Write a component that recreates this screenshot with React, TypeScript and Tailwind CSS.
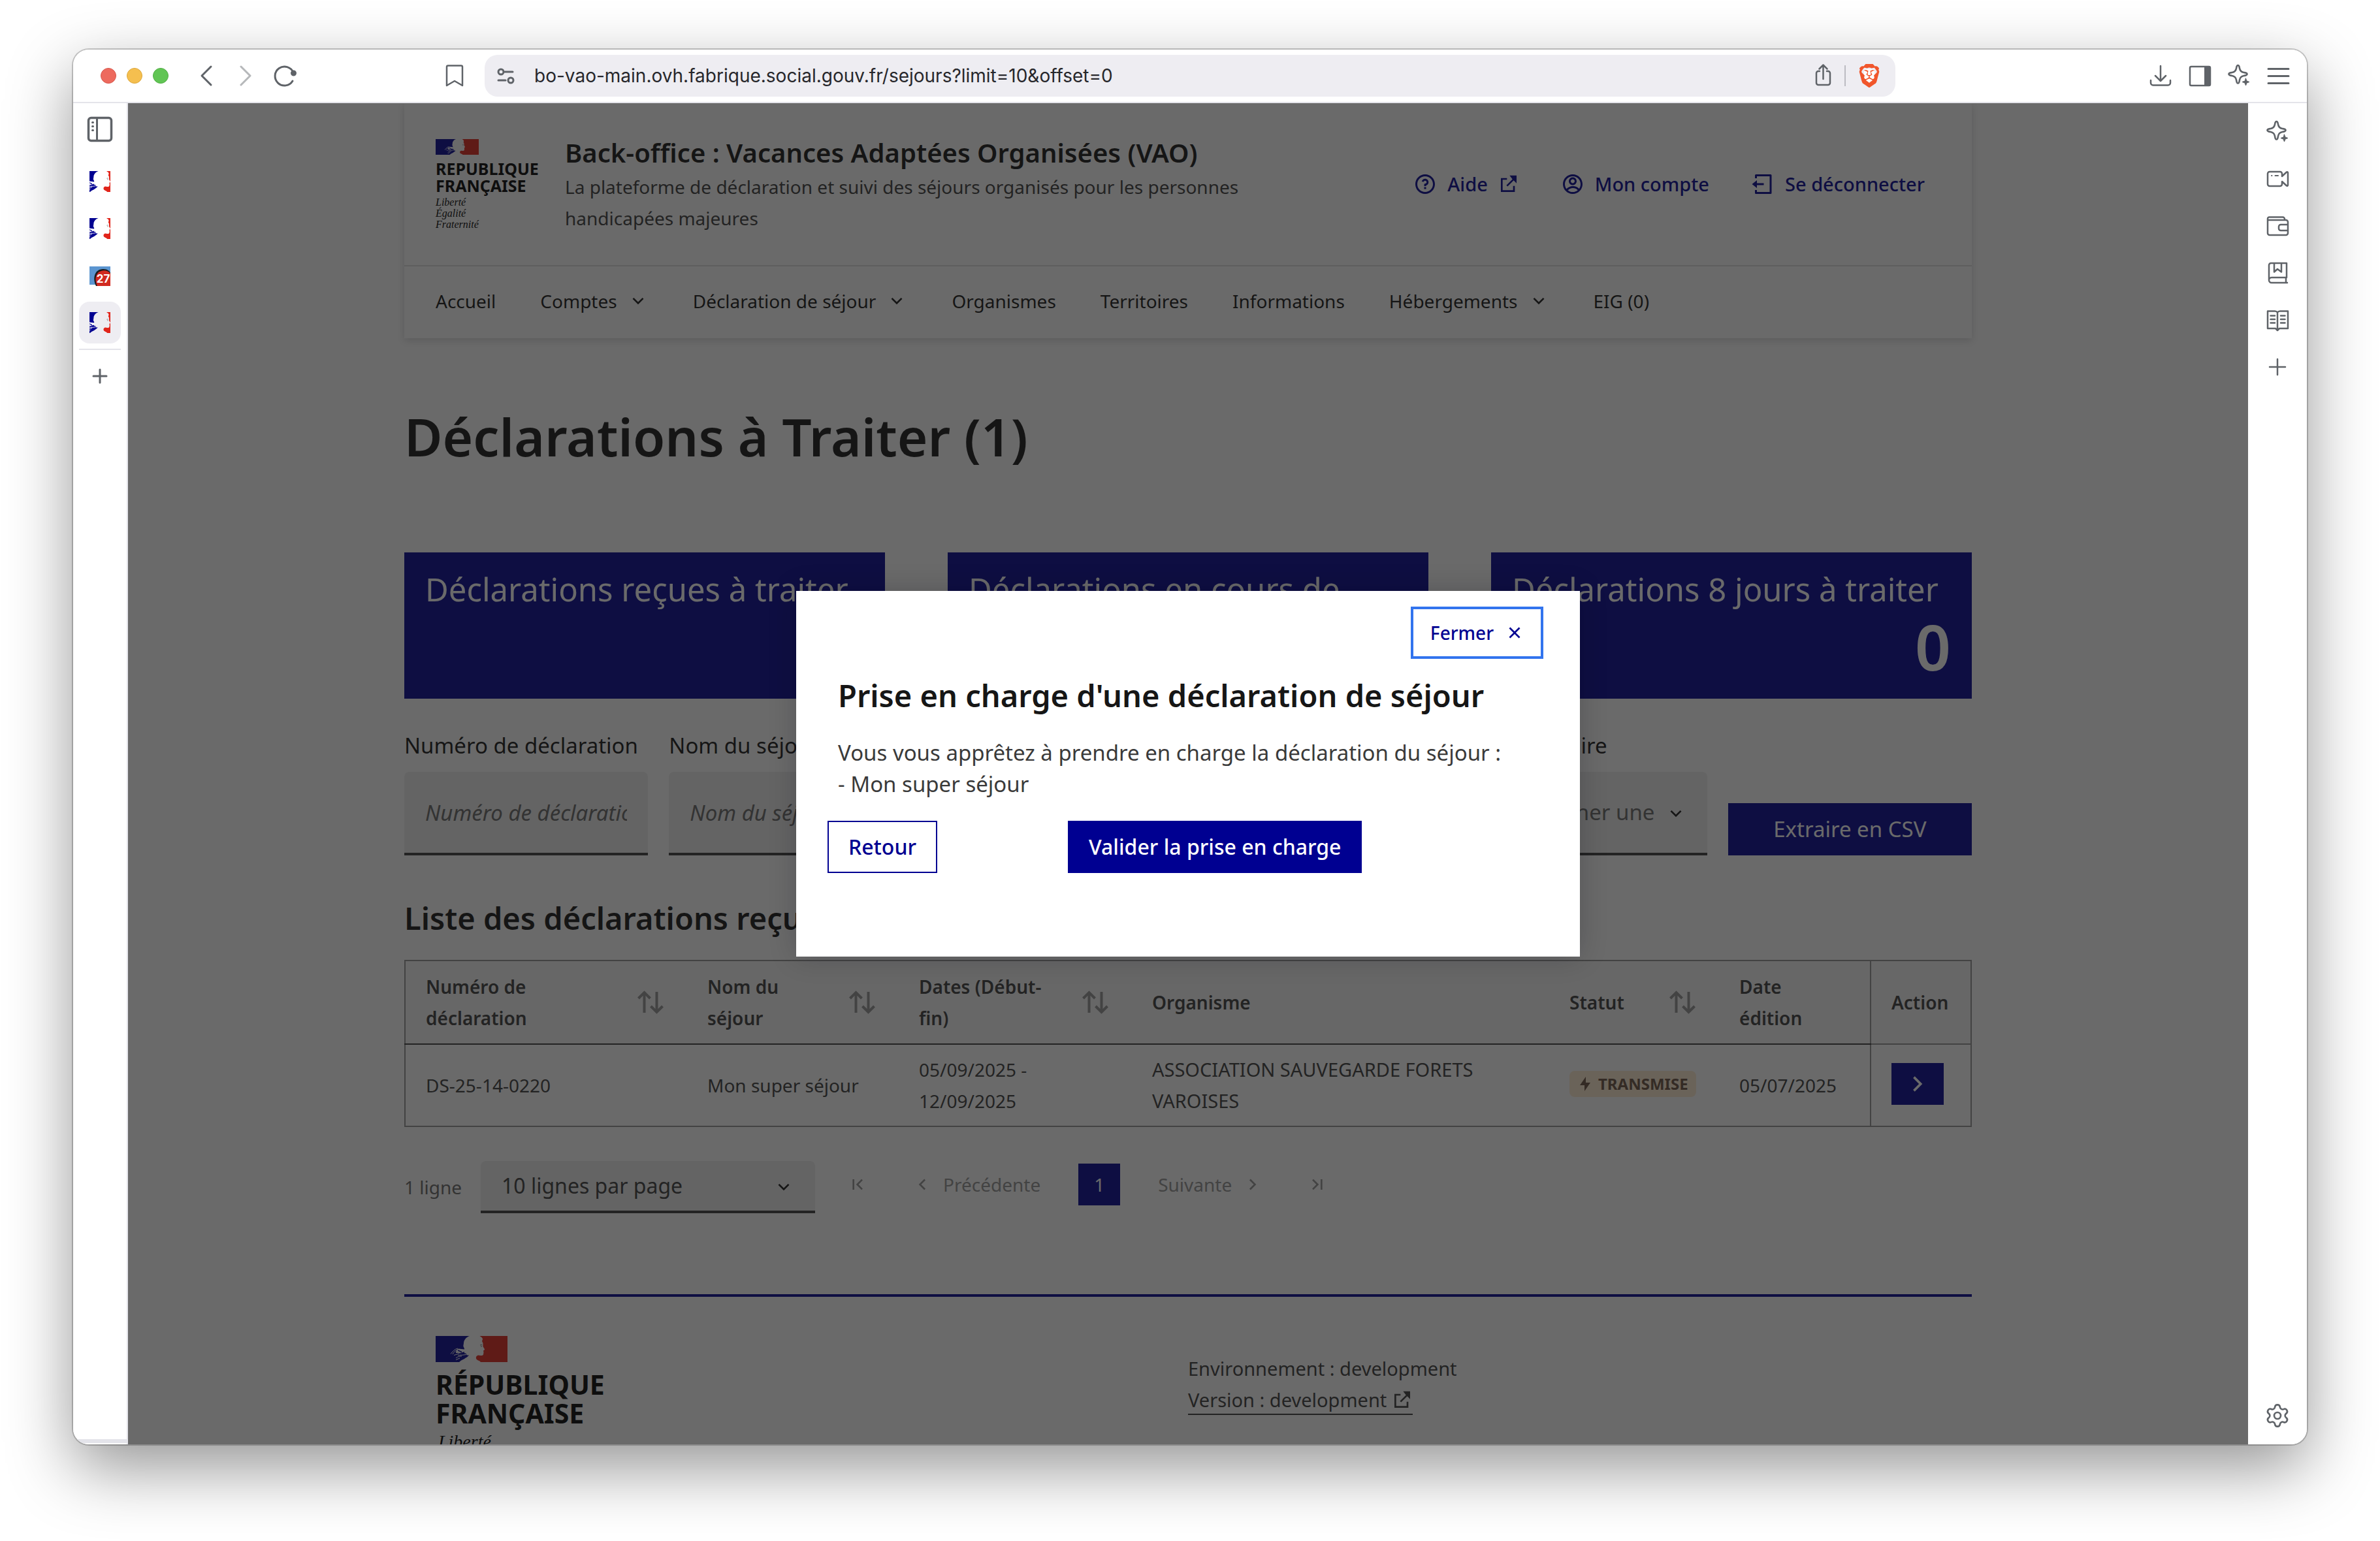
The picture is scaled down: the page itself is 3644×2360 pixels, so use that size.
import React from 'react';
import {
  RiAccountCircleLine,
  RiArrowDownSLine,
  RiArrowLeftSLine,
  RiArrowRightSLine,
  RiCloseLine,
  RiFlashlightFill,
  RiQuestionLine,
  RiSkipLeftLine,
  RiSkipRightLine,
} from 'react-icons/ri';
import { SiBrave } from 'react-icons/si';
import { Settings } from 'lucide-react';

type IconProps = { className?: string; children: React.ReactNode };

/* Browser chrome icons share a 40px grid and a thin grey stroke. */
function ChromeIcon({ className = '', children }: IconProps) {
  return (
    <svg
      viewBox="0 0 40 40"
      className={`size-10 shrink-0 fill-none stroke-[#5f6368] stroke-2 ${className}`}
      strokeLinecap="round"
      strokeLinejoin="round"
      aria-hidden="true"
    >
      {children}
    </svg>
  );
}

function Sparkle() {
  return (
    <ChromeIcon>
      <g transform="translate(3 2)">
        <path d="M15.5 2C17.5 2 17.6 4 18 6.5C18.7 10.5 20.5 12.3 24.5 13C27 13.4 29.500 13.500 29.500 15.500S27 17.600 24.500 18C20.500 18.700 18.700 20.500 18 24.500C17.600 27 17.500 29.500 15.500 29.500S13.400 27 13 24.500C12.300 20.500 10.500 18.700 6.500 18C4 17.600 1.500 17.500 1.500 15.500S4 13.400 6.500 13C10.500 12.300 12.300 10.500 13 6.500C13.400 4 13.500 2 15.500 2Z" strokeWidth="2.600" />
        <path d="M27.500 22L29 26L33 27.500L29 29L27.500 33L26 29L22 27.500L26 26Z" fill="#5f6368" strokeWidth="1" />
      </g>
    </ChromeIcon>
  );
}

function Plus() {
  return (
    <ChromeIcon>
      <path d="M20 8V32M8 20H32" strokeWidth="2.500" />
    </ChromeIcon>
  );
}

function Marianne({ className, viewBox }: { className: string; viewBox: string }) {
  return (
    <svg viewBox={viewBox} className={className} aria-hidden="true">
      <path
        fill="#000091"
        d="M0 0H52C49 1 47 2.500 45.500 4.500C43.500 7 43 9 43 11L42.300 15.500L44 19.500L43.500 22L46 26L48 29.500L51 29.500C49 32 46 33.500 44 35L39 37.500L36 40H0Z"
      />
      <path fill="#fff" d="M31 26C31 23 33 20 35 19.500L44 20.500L46.500 27L42 25.500L38 28L36 26Z" />
      <path
        fill="none"
        stroke="#fff"
        strokeWidth="1"
        d="M23 27.500C26 24 29 20 34 19M26 28C28 24 31 22 34 21M28 29.500L36 27M34 30L47 28.500M31 34C34 31 37 31.500 40 31M31 36.500L37 34"
      />
      <path fill="none" stroke="#000091" strokeWidth="1.500" d="M34 22L40 24.500M37 27L44 25" />
      <path
        fill="#e1251b"
        d="M110 0H67.500C70 1.500 72 3 72 5L71 8L72.500 11L72.500 16C73.500 18 75 19.500 75 21C74.500 22 73 22 73 22.500L73.500 25L73 28.500C72.500 30 71 30 69 30L65 29.500C62.500 30.500 61.500 32 62 34.500C62.500 37 66 37.500 67.500 38.500L69 40H110Z"
      />
      <path fill="none" stroke="#777" strokeWidth="1" d="M68 14L71 13.500M69 16H71" />
    </svg>
  );
}

function ExternalLink({ className }: { className: string }) {
  return (
    <svg viewBox="0 0 24 24" className={className} fill="currentColor" aria-hidden="true">
      <path d="M10 5v2H5v12h12v-5h2v7H3V5h7zm11-3v9l-3.300-3.300-7 7-1.400-1.400 7-7L13 2h8z" />
    </svg>
  );
}

function Logout({ className }: { className: string }) {
  return (
    <svg viewBox="0 0 24 24" className={className} fill="currentColor" aria-hidden="true">
      <path d="M4 18h2v2h13V4H6v2H4V3a1 1 0 011-1h15a1 1 0 011 1v18a1 1 0 01-1 1H5a1 1 0 01-1-1v-3zm2-7h7v2H6v3l-5-4 5-4v3z" />
    </svg>
  );
}

function SortButton({ label }: { label: string }) {
  return (
    <button type="button" aria-label={`Trier par ${label}`} className="mr-9 shrink-0 text-[#929292]">
      <svg viewBox="0 0 40 36" className="h-9 w-10 fill-none stroke-current stroke-[4]" aria-hidden="true">
        <path d="M10.500 34V3M1.500 12L10.500 3L19.500 12M29.500 2V33M20.500 24L29.500 33L38.500 24" />
      </svg>
    </button>
  );
}

function BrowserBar() {
  return (
    <div className="flex h-[82px] shrink-0 items-center border-b-2 border-[#e4e4ea] bg-white pr-6 pl-[42px]">
      <div className="flex gap-4">
        <button type="button" aria-label="Fermer la fenêtre" className="size-6 rounded-full border border-[#d8584d] bg-[#ed6a5e]" />
        <button type="button" aria-label="Réduire" className="size-6 rounded-full border border-[#dca73c] bg-[#f5bf4f]" />
        <button type="button" aria-label="Agrandir" className="size-6 rounded-full border border-[#52ad45] bg-[#61c554]" />
      </div>
      <div className="ml-[38px] flex gap-5">
        <button type="button" aria-label="Page précédente">
          <ChromeIcon><path d="M27 6L13 20L27 34" strokeWidth="3" /></ChromeIcon>
        </button>
        <button type="button" aria-label="Page suivante">
          <ChromeIcon className="opacity-45"><path d="M13 6L27 20L13 34" strokeWidth="3" /></ChromeIcon>
        </button>
        <button type="button" aria-label="Recharger">
          <ChromeIcon>
            <path d="M32 28A14.500 14.500 0 1 1 33 15" strokeWidth="3" />
            <circle cx="33.500" cy="16" r="3.500" fill="#5f6368" />
          </ChromeIcon>
        </button>
      </div>
      <button type="button" aria-label="Ajouter un favori" className="ml-[220px]">
        <ChromeIcon><path d="M10 4.500H30A2 2 0 0 1 32 6.500V35L20 28L8 35V6.500A2 2 0 0 1 10 4.500Z" strokeWidth="2.500" /></ChromeIcon>
      </button>
      <div className="mr-[386px] ml-[26px] flex h-16 flex-1 items-center rounded-[20px] bg-[#eeedf2] pr-5 pl-3">
        <ChromeIcon className="stroke-[#2e2f33]">
          <circle cx="13" cy="14" r="4" strokeWidth="3" />
          <path d="M19 14H31M9 27H20" strokeWidth="3" />
          <circle cx="28" cy="27" r="4" strokeWidth="3" />
        </ChromeIcon>
        <input
          aria-label="Adresse"
          defaultValue="bo-vao-main.ovh.fabrique.social.gouv.fr/sejours?limit=10&offset=0"
          className="ml-6 flex-1 bg-transparent font-[Inter,sans-serif] text-[28px] leading-10 text-[#27272b] outline-none"
        />
        <button type="button" aria-label="Partager">
          <ChromeIcon className="stroke-[#3f4046]">
            <path d="M14 13H12A3 3 0 0 0 9 16V31A3 3 0 0 0 12 34H27A3 3 0 0 0 30 31V16A3 3 0 0 0 27 13H25M19.500 25V4M13.500 9.500L19.500 3.500L25.500 9.500" strokeWidth="2.500" />
          </ChromeIcon>
        </button>
        <span className="mx-3 h-8 w-0.5 bg-[#bcbcc2]" />
        <button type="button" aria-label="Brave Shields" className="relative ml-1 flex size-10 items-center justify-center">
          <span className="absolute h-5 w-4 rounded-b-full bg-white" />
          <SiBrave className="relative size-9 text-[#f1562b]" />
        </button>
      </div>
      <div className="flex gap-5">
        <button type="button" aria-label="Téléchargements">
          <ChromeIcon><path d="M20 5V27M12 20L20 28L28 20M5 27V31A3.500 3.500 0 0 0 8.500 34.500H31.500A3.500 3.500 0 0 0 35 31V27" strokeWidth="2.500" /></ChromeIcon>
        </button>
        <button type="button" aria-label="Panneau latéral">
          <ChromeIcon>
            <rect x="5" y="6" width="31" height="29" rx="2" strokeWidth="2.500" />
            <path d="M28 6H35V35H28Z" fill="#5f6368" />
          </ChromeIcon>
        </button>
        <button type="button" aria-label="Assistant"><Sparkle /></button>
        <button type="button" aria-label="Menu">
          <ChromeIcon><path d="M5 9.500H36M5 20.500H36M5 31.500H36" strokeWidth="3" /></ChromeIcon>
        </button>
      </div>
    </div>
  );
}

function Favicon() {
  return <Marianne viewBox="35 0 40 40" className="size-8" />;
}

const tabClass = 'flex size-16 items-center justify-center rounded-2xl';

function TabRail() {
  return (
    <aside className="flex w-[84px] shrink-0 flex-col items-center border-r-2 border-[#e4e4ea] bg-white pt-2">
      <button type="button" aria-label="Onglets verticaux" className={tabClass}>
        <ChromeIcon>
          <rect x="2.500" y="2.500" width="35" height="35" rx="4" strokeWidth="3.500" />
          <path d="M15.500 3V37" strokeWidth="3" />
          <path d="M8.500 9.500H9.500M8.500 15.500H9.500M8.500 21.500H9.500" strokeWidth="3" />
        </ChromeIcon>
      </button>
      <div className="mt-4 flex flex-col gap-2">
        <button type="button" aria-label="Onglet 1" className={tabClass}><Favicon /></button>
        <button type="button" aria-label="Onglet 2" className={tabClass}><Favicon /></button>
        <button type="button" aria-label="Onglet 3" className={tabClass}>
          <svg viewBox="0 0 32 32" className="size-8" aria-hidden="true">
            <rect y="2" width="32" height="28" fill="#5b95d0" />
            <path d="M10 32C4 20 8 6 21 6C27 6 31 9 32 12V32Z" fill="#1b1b1b" />
            <path d="M12 32C8 24 9 16 13 12C18 7 28 7 32 13V32Z" fill="#d12a20" />
            <text x="21" y="27" textAnchor="middle" fontFamily="Inter" fontWeight="700" fontSize="17" fill="#fff">27</text>
          </svg>
        </button>
        <button type="button" aria-label="Onglet actif" className={`${tabClass} bg-[#eeedf2]`}><Favicon /></button>
      </div>
      <div className="mt-2 h-0.5 w-16 bg-[#e4e4ea]" />
      <button type="button" aria-label="Nouvel onglet" className={`mt-2 ${tabClass}`}>
        <ChromeIcon className="stroke-[#3f4046]"><path d="M20 10V30M10 20H30" strokeWidth="3" /></ChromeIcon>
      </button>
      <div className="mt-auto mb-0.5 h-1.5 w-full bg-[#e4e4ea]" />
    </aside>
  );
}

function ToolRail() {
  return (
    <aside className="flex w-[90px] shrink-0 flex-col items-center gap-8 bg-white py-6">
      <button type="button" aria-label="Assistant Leo"><Sparkle /></button>
      <button type="button" aria-label="Appel vidéo">
        <ChromeIcon>
          <path d="M8 9H24A3 3 0 0 1 27 12V16L34 9.500C35 9 36 9.500 36 10.500V29.500C36 30.500 35 31 34 30.500L27 24V28A3 3 0 0 1 24 31H8A3 3 0 0 1 5 28V12A3 3 0 0 1 8 9Z" strokeWidth="2.500" />
          <path d="M11 15H11.500M16.500 15H21" />
        </ChromeIcon>
      </button>
      <button type="button" aria-label="Portefeuille">
        <ChromeIcon>
          <path d="M5 11V31A3 3 0 0 0 8 34H33A3 3 0 0 0 36 31V14A3 3 0 0 0 33 11ZM5 11V9A2.500 2.500 0 0 1 7.500 6.500H28A3 3 0 0 1 31 9.500V11M36 18H25A3 3 0 0 0 22 21V24A3 3 0 0 0 25 27H36" strokeWidth="2.500" />
        </ChromeIcon>
      </button>
      <button type="button" aria-label="Favoris">
        <ChromeIcon>
          <path d="M35 35H11A4 4 0 0 1 7 31V8A3 3 0 0 1 10 5H34V27H11A4 4 0 0 0 7 31M33 27V35M15 5V18.500L20 14L26 18.500V5" strokeWidth="2.500" />
        </ChromeIcon>
      </button>
      <button type="button" aria-label="Liste de lecture">
        <ChromeIcon>
          <path d="M20 8.500C19 7 18 6.500 16 6.500H5V33H17L20 36L23 33H36V6.500H24C22 6.500 21 7 20 8.500ZM20 8.500V36M9.500 13.500H16M9.500 19H16M9.500 24.500H16M25 13.500H31.500M25 19H31.500M25 24.500H31.500" strokeWidth="2.500" />
        </ChromeIcon>
      </button>
      <button type="button" aria-label="Ajouter au panneau"><Plus /></button>
      <button type="button" aria-label="Réglages" className="mt-auto">
        <Settings className="size-10 text-[#5f6368]" strokeWidth={1.6} aria-hidden="true" />
      </button>
    </aside>
  );
}

function NavItem({ label, menu = false }: { label: string; menu?: boolean }) {
  if (menu) {
    return (
      <button type="button" className="flex items-center gap-4">
        {label}
        <RiArrowDownSLine className="size-8" />
      </button>
    );
  }
  return <a href="#">{label}</a>;
}

function SiteHeader() {
  return (
    <header className="bg-white shadow-[0_4px_12px_rgba(0,0,18,0.16)]">
      <div className="flex items-center gap-8 border-b-2 border-[#ddd] py-12 pr-[72px] pl-12">
        <a href="#" aria-label="République Française" className="flex w-[166px] shrink-0 flex-col text-black">
          <Marianne viewBox="0 0 110 40" className="w-[66px]" />
          <span className="mt-2 text-[25px] leading-[26px] font-bold">REPUBLIQUE<br />FRANÇAISE</span>
          <span className="mt-1 font-['Liberation_Serif',serif] text-[16px] leading-[17px] italic">Liberté<br />Égalité<br />Fraternité</span>
        </a>
        <div className="max-w-[1100px]">
          <p className="text-[40px] leading-[56px] font-semibold">Back-office : Vacances Adaptées Organisées (VAO)</p>
          <p className="text-[28px] leading-[48px] text-[#3a3a3a]">La plateforme de déclaration et suivi des séjours organisés pour les personnes handicapées majeures</p>
        </div>
        <div className="ml-auto flex shrink-0 items-center gap-16 text-[29px] leading-[48px] font-medium text-[#000091]">
          <a href="#" className="flex items-center gap-4">
            <RiQuestionLine className="size-9" />
            Aide
            <ExternalLink className="size-8" />
          </a>
          <a href="#" className="flex items-center gap-4">
            <RiAccountCircleLine className="size-9" />
            Mon compte
          </a>
          <button type="button" className="flex items-center gap-4">
            <Logout className="size-9" />
            Se déconnecter
          </button>
        </div>
      </div>
      <nav className="flex h-[110px] items-center gap-[68px] px-12 pb-1 text-[28px]">
        <NavItem label="Accueil" />
        <NavItem label="Comptes" menu />
        <NavItem label="Déclaration de séjour" menu />
        <NavItem label="Organismes" />
        <NavItem label="Territoires" />
        <NavItem label="Informations" />
        <NavItem label="Hébergements" menu />
        <NavItem label="EIG (0)" />
      </nav>
    </header>
  );
}

function StatCard({ title, count }: { title: string; count: number }) {
  return (
    <div className="bg-[#000091] px-8 pt-6 pb-8 text-white">
      <p className="h-16 text-[49px] leading-[64px]">{title}</p>
      <p className="mt-2 text-right text-[96px] leading-[96px] font-semibold">{count}</p>
    </div>
  );
}

const fieldClass =
  'h-32 w-full appearance-none rounded-t-lg border-b-4 border-[#3a3a3a] bg-[#eee] px-8 text-[33px] text-[#666] placeholder:italic placeholder:text-[#666]';

function TextField({ id, label }: { id: string; label: string }) {
  return (
    <div className="flex min-w-0 flex-col gap-4">
      <label htmlFor={id} className="text-[33px] leading-[48px] whitespace-nowrap">{label}</label>
      <input id={id} type="text" placeholder={label} className={fieldClass} />
    </div>
  );
}

function SelectField({ id, label }: { id: string; label: string }) {
  return (
    <div className="flex min-w-0 flex-col gap-4">
      <label htmlFor={id} className="text-[33px] leading-[48px] whitespace-nowrap">{label}</label>
      <div className="relative">
        <select id={id} className={fieldClass}>
          <option>Sélectionner une</option>
        </select>
        <RiArrowDownSLine className="pointer-events-none absolute top-12 right-8 size-8" />
      </div>
    </div>
  );
}

const headCell = 'border-b-2 border-[#3a3a3a] py-[15px] pl-[31px] text-left font-semibold';
const bodyCell = 'py-[14px] pr-4 pl-[31px]';

function DeclarationTable() {
  return (
    <table className="mt-8 w-full table-fixed border-collapse border-2 border-[#929292] text-[28px] leading-[48px] text-[#3a3a3a]">
      <colgroup>
        <col className="w-[432px]" />
        <col className="w-[324px]" />
        <col className="w-[357px]" />
        <col />
        <col className="w-[260px]" />
        <col className="w-[232px]" />
        <col className="w-[154px]" />
      </colgroup>
      <thead className="bg-[#f6f6f6]">
        <tr>
          <th scope="col" className={headCell}>
            <div className="flex items-center justify-between"><span>Numéro de<br />déclaration</span><SortButton label="numéro" /></div>
          </th>
          <th scope="col" className={headCell}>
            <div className="flex items-center justify-between"><span>Nom du<br />séjour</span><SortButton label="nom" /></div>
          </th>
          <th scope="col" className={headCell}>
            <div className="flex items-center justify-between"><span>Dates (Début-<br />fin)</span><SortButton label="dates" /></div>
          </th>
          <th scope="col" className={headCell}>Organisme</th>
          <th scope="col" className={headCell}>
            <div className="flex items-center justify-between"><span>Statut</span><SortButton label="statut" /></div>
          </th>
          <th scope="col" className={headCell}>Date<br />édition</th>
          <th scope="col" className="border-2 border-[#929292] pl-[31px] text-left font-semibold">Action</th>
        </tr>
      </thead>
      <tbody>
        <tr>
          <td className={bodyCell}>DS-25-14-0220</td>
          <td className={bodyCell}>Mon super séjour</td>
          <td className={bodyCell}>05/09/2025 -<br />12/09/2025</td>
          <td className={`${bodyCell} text-[29px]`}>ASSOCIATION SAUVEGARDE FORETS<br />VAROISES</td>
          <td className={bodyCell}>
            <span className="mb-1 flex h-10 w-fit items-center gap-2 rounded-lg bg-[#feebd0] px-3 text-[24px] font-bold text-[#695240]">
              <RiFlashlightFill className="size-6" />
              TRANSMISE
            </span>
          </td>
          <td className={bodyCell}>05/07/2025</td>
          <td className="border-2 border-[#929292] pl-[31px]">
            <button type="button" aria-label="Prendre en charge" className="mb-1 flex h-16 w-20 items-center justify-center bg-[#000091] text-white">
              <RiArrowRightSLine className="size-11" />
            </button>
          </td>
        </tr>
      </tbody>
    </table>
  );
}

function Pagination() {
  return (
    <div className="mt-[52px] flex items-center text-[28px] leading-[48px] text-[#929292]">
      <span className="w-[117px] text-[#666]">1 ligne</span>
      <div className="relative w-[512px]">
        <select
          aria-label="Lignes par page"
          className="h-20 w-full appearance-none rounded-t-lg border-b-4 border-[#3a3a3a] bg-[#eee] px-8 text-[32px] text-[#3a3a3a]"
        >
          <option>10 lignes par page</option>
        </select>
        <RiArrowDownSLine className="pointer-events-none absolute top-6 right-8 size-8 text-[#161616]" />
      </div>
      <nav aria-label="Pagination" className="mb-2 ml-12 flex items-center">
        <button type="button" aria-label="Première page"><RiSkipLeftLine className="size-8" /></button>
        <button type="button" className="ml-[68px] flex items-center gap-4"><RiArrowLeftSLine className="size-8" />Précédente</button>
        <button type="button" className="mx-[58px] size-16 bg-[#000091] text-white">1</button>
        <button type="button" className="flex items-center gap-4">Suivante<RiArrowRightSLine className="size-8" /></button>
        <button type="button" aria-label="Dernière page" className="ml-[68px]"><RiSkipRightLine className="size-8" /></button>
      </nav>
    </div>
  );
}

function SiteFooter() {
  return (
    <footer className="mt-[124px] grid grid-cols-2 border-t-4 border-[#000091] pt-[60px] pl-12">
      <div className="flex flex-col text-black">
        <Marianne viewBox="0 0 110 40" className="h-10 w-[110px]" />
        <span className="mt-3 text-[41px] leading-[44px] font-bold">RÉPUBLIQUE<br />FRANÇAISE</span>
        <span className="mt-2 ml-1 font-['Liberation_Serif',serif] text-[28px] leading-[28px] italic">Liberté</span>
      </div>
      <div className="-ml-6 pt-[26px] text-[29px] leading-[48px] text-[#3a3a3a]">
        <p>Environnement : development</p>
        <a href="#" className="inline-flex items-center gap-2 border-b-2 border-[#3a3a3a] leading-[42px]">
          Version : development
          <ExternalLink className="size-8" />
        </a>
      </div>
    </footer>
  );
}

function Dialog() {
  return (
    <div className="absolute inset-0 flex items-center justify-center bg-[#161616]/64">
      <div role="dialog" aria-modal="true" aria-labelledby="dialog-title" className="w-[1200px] bg-white pt-6 pr-14 pb-32 pl-12 shadow-[0_0_40px_rgba(0,0,18,0.2)]">
        <div className="flex justify-end">
          <button type="button" className="flex h-20 items-center gap-4 border-4 border-[#3274ee] pr-6 pl-[26px] text-[28px] font-medium text-[#000091]">
            Fermer
            <RiCloseLine className="size-8" />
          </button>
        </div>
        <h2 id="dialog-title" className="mt-6 pl-4 text-[47px] leading-[64px] font-semibold">Prise en charge d'une déclaration de séjour</h2>
        <p className="mt-8 pl-4 text-[33px] leading-[48px] text-[#3a3a3a]">
          Vous vous apprêtez à prendre en charge la déclaration du séjour :<br />- Mon super séjour
        </p>
        <div className="mt-8 flex text-[32px] font-medium">
          <div className="w-[368px]">
            <button type="button" className="h-20 border-2 border-[#000091] px-[30px] text-[#000091]">Retour</button>
          </div>
          <button type="button" className="h-20 bg-[#000091] px-8 text-white">Valider la prise en charge</button>
        </div>
      </div>
    </div>
  );
}

export default function App() {
  return (
    <div className="flex h-screen flex-col bg-white px-28 pt-[76px] pb-[148px]">
      <div className="flex min-h-0 flex-1 flex-col overflow-hidden rounded-[24px] shadow-[0_0_0_2px_rgba(0,0,0,0.2),0_36px_100px_rgba(0,0,0,0.42)]">
        <BrowserBar />
        <div className="flex min-h-0 flex-1">
          <TabRail />
          <div className="relative min-w-0 flex-1 overflow-hidden bg-white font-['Noto_Sans',sans-serif] text-[#161616]">
            <div className="mx-auto w-full max-w-[2400px]">
              <SiteHeader />
              <main>
                <h1 className="mt-[102px] text-[80px] leading-[96px] font-semibold">Déclarations à Traiter (1)</h1>
                <div className="mt-[130px] grid grid-cols-3 gap-24">
                  <StatCard title="Déclarations reçues à traiter" count={1} />
                  <StatCard title="Déclarations en cours de traitement" count={0} />
                  <StatCard title="Déclarations 8 jours à traiter" count={0} />
                </div>
                <form className="mt-12 grid grid-cols-6 items-end gap-8">
                  <TextField id="numero" label="Numéro de déclaration" />
                  <TextField id="nom" label="Nom du séjour" />
                  <TextField id="organisme" label="Organisme" />
                  <SelectField id="statut" label="Statut" />
                  <SelectField id="questionnaire" label="Questionnaire" />
                  <button type="button" className="h-20 bg-[#000091] text-[33px] text-white">Extraire en CSV</button>
                </form>
                <h2 className="mt-16 text-[47px] leading-[64px] font-semibold">Liste des déclarations reçues</h2>
                <DeclarationTable />
                <Pagination />
              </main>
              <SiteFooter />
            </div>
            <Dialog />
          </div>
          <ToolRail />
        </div>
      </div>
    </div>
  );
}
